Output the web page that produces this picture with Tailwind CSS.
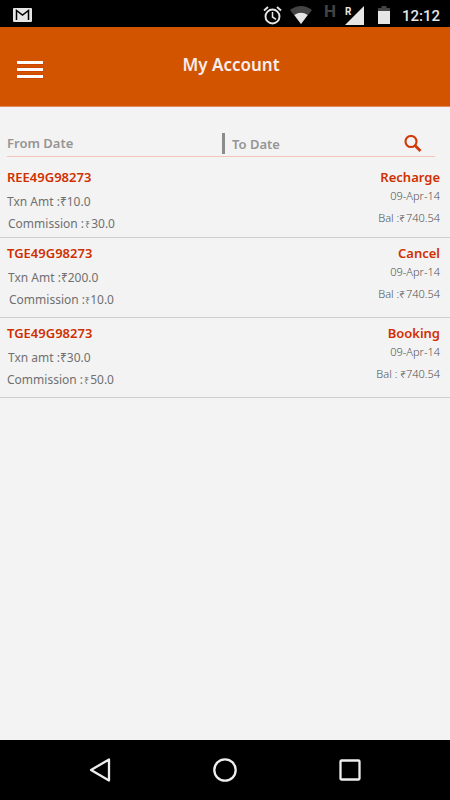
<!DOCTYPE html>
<html lang="en">
<head>
<meta charset="utf-8">
<meta name="viewport" content="width=device-width, initial-scale=1">
<title>My Account</title>
<script src="https://cdn.jsdelivr.net/npm/@tailwindcss/browser@4"></script>
</head>
<body class="flex min-h-screen flex-col bg-[#f3f3f3] font-['Noto_Sans','Open_Sans',sans-serif] text-[#707070]">

<!-- Status bar -->
<div class="flex h-[27px] items-start justify-between bg-black pr-[10px] pl-[13px] text-[#e6e6e6]">
  <svg class="mt-2 h-[14px] w-[19px]" viewBox="0 0 19 14" aria-label="Gmail"><rect width="19" height="14" rx="1" fill="#e6e6e6"/><path d="M3.500 12V2.500L9.500 7l6-4.500V12" fill="none" stroke="#000" stroke-width="1.500"/></svg>
  <div class="flex items-start">
    <svg class="mt-[6px] h-[19px] w-[19px]" viewBox="0 0 19 19" fill="none" stroke="#e6e6e6" aria-label="Alarm"><circle cx="9.500" cy="10.500" r="7" stroke-width="1.900"/><path d="M9.500 6v5l3.500 2.300" stroke-width="1.500"/><path d="M1 4.500 5 1M18 4.500 14 1" stroke-width="1.900"/></svg>
    <svg class="mt-[6px] ml-2 h-[18px] w-[22px]" viewBox="0 0 22 18" aria-label="Wi-Fi"><path d="M0 4Q11-4 22 4L11 18Z" fill="#444"/><path d="M4.300 9Q11 4.500 17.700 9L11 18Z" fill="#e6e6e6"/></svg>
    <span class="mt-[3px] ml-[10px] w-4 text-center font-[Roboto] text-[17px] leading-[17px] font-bold text-[#444]">H</span>
    <div class="relative mt-[6px] ml-[7px] h-[19px] w-[19px]">
      <svg class="h-[19px] w-[19px]" viewBox="0 0 19 19" aria-label="Signal"><path d="M19 0v19H0Z" fill="#e6e6e6"/></svg>
      <span class="absolute top-0 left-0 font-[Roboto] text-[10px] leading-[11px] font-bold">R</span>
    </div>
    <svg class="mt-[6px] ml-[14px] h-[18px] w-3" viewBox="0 0 12 18" preserveAspectRatio="none" aria-label="Battery"><path d="M0 5V2h3.500V0h5v2H12v3Z" fill="#444"/><path d="M0 5h12v13H0Z" fill="#e6e6e6"/></svg>
    <span class="mt-2 ml-[12px] font-[Roboto] text-[15px] leading-[16px] font-medium">12:12</span>
  </div>
</div>

<!-- App bar -->
<header class="grid h-[80px] grid-cols-[1fr_auto_1fr] items-center border-b border-[#e08b5e] bg-[#d35400] px-[17px]">
  <button class="mt-[7px] w-[26px]" aria-label="Open menu">
    <svg class="h-[18px] w-[26px]" viewBox="0 0 26 18"><path d="M0 1.500h26M0 8.500h26M0 15.500h26" stroke="#c81e00" stroke-width="4" opacity=".6"/><path d="M0 1.500h26M0 8.500h26M0 15.500h26" stroke="#fff" stroke-width="3"/></svg>
  </button>
  <h1 class="-mt-1 pl-3 text-[17px] leading-5 font-semibold text-[#f6eeee]">My Account</h1>
</header>

<main class="flex-1">
  <!-- Date filter -->
  <form class="mt-[26px] mr-[15px] ml-[7px] flex h-6 items-start border-b border-[#f3c3bc]">
    <input aria-label="From date" placeholder="From Date" class="h-5 min-w-0 flex-1 text-[13px] font-semibold outline-none placeholder:text-[#959595] placeholder:opacity-100">
    <span class="h-[21px] w-[3px] bg-[#8c8c8c]"></span>
    <input aria-label="To date" placeholder="To Date" class="h-[22px] w-[165px] min-w-0 pl-[7px] text-[13px] font-semibold outline-none placeholder:text-[#959595] placeholder:opacity-100">
    <button type="button" class="mt-[2px] mr-[13px] ml-[14px]" aria-label="Search">
      <svg class="h-[17px] w-[18px]" viewBox="0 0 18 17" fill="none" stroke="#d03a08"><circle cx="7" cy="6.500" r="5.500" stroke-width="2.100"/><path d="m11 10.500 5.500 5.500" stroke-width="2.800"/></svg>
    </button>
  </form>

  <!-- Transactions -->
  <ul>
    <li class="flex h-[81px] justify-between border-b border-[#cfcfcf] pt-[10px] pr-[10px] pl-[7px]">
      <div>
        <h2 class="text-[13px] leading-5 font-semibold text-[#d03000]">REE49G98273</h2>
        <p class="mt-[5px] text-[12px] leading-5">Txn Amt :<span>₹</span>10.0</p>
        <p class="mt-[2px] pl-px text-[12px] leading-5">Commission :<span class="px-px text-[9px]">₹</span>30.0</p>
      </div>
      <div class="text-right">
        <p class="text-[13px] leading-5 font-semibold text-[#d03000]">Recharge</p>
        <p class="mt-px text-[11px] leading-4 font-light text-[#505050]">09-Apr-14</p>
        <p class="mt-[6px] text-[11px] leading-4 font-light text-[#505050]">Bal :<span class="pr-px text-[10px]">₹</span>740.54</p>
      </div>
    </li>
    <li class="flex h-[80px] justify-between border-b border-[#cfcfcf] pt-[5px] pr-[10px] pl-[7px]">
      <div>
        <h2 class="text-[13px] leading-5 font-semibold text-[#d03000]">TGE49G98273</h2>
        <p class="mt-[5px] pl-px text-[12px] leading-5">Txn Amt :<span>₹</span>200.0</p>
        <p class="mt-[2px] pl-[2px] text-[12px] leading-5">Commission :<span class="text-[9px]">₹</span>10.0</p>
      </div>
      <div class="text-right">
        <p class="text-[13px] leading-5 font-semibold text-[#d03000]">Cancel</p>
        <p class="mt-px text-[11px] leading-4 font-light text-[#505050]">09-Apr-14</p>
        <p class="mt-[6px] text-[11px] leading-4 font-light text-[#505050]">Bal :<span class="pr-px text-[10px]">₹</span>740.54</p>
      </div>
    </li>
    <li class="flex h-[80px] justify-between border-b border-[#cfcfcf] pt-[5px] pr-[10px] pl-[7px]">
      <div>
        <h2 class="text-[13px] leading-5 font-semibold text-[#d03000]">TGE49G98273</h2>
        <p class="mt-[5px] pl-px text-[12px] leading-5">Txn amt :<span>₹</span>30.0</p>
        <p class="mt-[2px] text-[12px] leading-5">Commission :<span class="px-px text-[9px]">₹</span>50.0</p>
      </div>
      <div class="text-right">
        <p class="text-[13px] leading-5 font-semibold text-[#d03000]">Booking</p>
        <p class="mt-px text-[11px] leading-4 font-light text-[#505050]">09-Apr-14</p>
        <p class="mt-[6px] text-[11px] leading-4 font-light text-[#505050]">Bal : <span class="text-[10px]">₹</span>740.54</p>
      </div>
    </li>
  </ul>
</main>

<!-- System navigation -->
<nav class="grid h-[60px] grid-cols-[1fr_125px_1fr] items-center bg-black" aria-label="System">
  <button class="mr-[52px] justify-self-end" aria-label="Back"><svg class="h-6 w-[22px]" viewBox="0 0 22 24"><path d="M20 1.500v21L2 12Z" fill="none" stroke="#eee" stroke-width="2.300" stroke-linejoin="round"/></svg></button>
  <button class="justify-self-center" aria-label="Home"><svg class="h-6 w-6" viewBox="0 0 24 24"><circle cx="12" cy="12" r="10.700" fill="none" stroke="#eee" stroke-width="2.300"/></svg></button>
  <button class="ml-[51px] justify-self-start" aria-label="Recent apps"><svg class="h-[22px] w-[22px]" viewBox="0 0 22 22"><rect x="1.500" y="1.500" width="19" height="19" rx="1" fill="none" stroke="#eee" stroke-width="2.300"/></svg></button>
</nav>
</body>
</html>
